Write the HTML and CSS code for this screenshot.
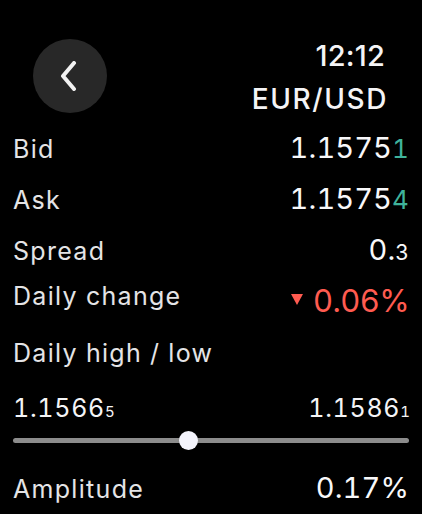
FILE: index.html
```html
<!DOCTYPE html>
<html>
<head>
<meta charset="utf-8">
<link rel="stylesheet" href="styles.css">
</head>
<body>
<div class="screen">
  <header class="header">
    <button class="back" aria-label="Back">
      <svg width="20" height="30" viewBox="0 0 20 30"><path d="M15 2 L4 15 L15 28" fill="none" stroke="#f2f2f2" stroke-width="4" stroke-linecap="round" stroke-linejoin="round"/></svg>
    </button>
    <div class="title">
      <div class="time">12:12</div>
      <div class="pair">EUR/USD</div>
    </div>
  </header>
  <div class="row">
    <span class="label">Bid</span>
    <span class="value">1.1575<span class="pip">1</span></span>
  </div>
  <div class="row">
    <span class="label">Ask</span>
    <span class="value">1.1575<span class="pip">4</span></span>
  </div>
  <div class="row">
    <span class="label">Spread</span>
    <span class="value">0.<span class="small">3</span></span>
  </div>
  <div class="row change">
    <span class="label">Daily change</span>
    <span class="value neg"><span class="tri"></span>0.06%</span>
  </div>
  <div class="row hl-label">
    <span class="label">Daily high / low</span>
  </div>
  <div class="row hl">
    <span class="hlv">1.1566<span class="tiny">5</span></span>
    <span class="hlv">1.1586<span class="tiny">1</span></span>
  </div>
  <div class="slider">
    <div class="track"></div>
    <div class="thumb"></div>
  </div>
  <div class="row amp">
    <span class="label">Amplitude</span>
    <span class="value">0.17%</span>
  </div>
</div>
</body>
</html>
```

FILE: styles.css
```css
* { box-sizing: border-box; }
html, body { margin: 0; padding: 0; background: #000; }
body {
  font-family: Inter, "Noto Sans", "DejaVu Sans", sans-serif;
  color: #e8e8ea;
  width: 422px;
  height: 514px;
  overflow: hidden;
  font-variant-numeric: tabular-nums;
}
.screen { padding: 0 13px 0 13px; }
.header {
  display: flex;
  justify-content: space-between;
  align-items: flex-start;
  padding: 33px 22px 0 20px;
  height: 122px;
}
.back {
  margin-top: 6px;
  width: 74px;
  height: 74px;
  border-radius: 50%;
  border: none;
  background: #282828;
  display: flex;
  align-items: center;
  justify-content: center;
  padding: 0 2px 0 0;
}
.title {
  text-align: right;
  color: #f4f4f6;
  font-weight: 500;
}
.time { font-size: 29px; line-height: 45px; letter-spacing: 0.2px; font-variant-numeric: normal; margin-right: 2px; }
.pair { font-size: 28px; line-height: 43px; letter-spacing: 1.6px; margin-right: -1px; }
.row {
  display: flex;
  justify-content: space-between;
  align-items: baseline;
  height: 51px;
  line-height: 51px;
}
.label { font-size: 25px; color: #e4e4e6; letter-spacing: 1.3px; }
.value { font-size: 29px; color: #f8f8fa; letter-spacing: 0.1px; }
.pip { color: #3fb39b; font-size: 26px; }
.small { font-size: 21px; }
.change { height: 53px; align-items: flex-start; }
.change .label { line-height: 42px; }
.neg { color: #ff5b50; font-size: 31px; line-height: 51px; display: flex; align-items: baseline; letter-spacing: -0.6px; }
.tri {
  width: 0; height: 0;
  border-left: 6px solid transparent;
  border-right: 6px solid transparent;
  border-top: 11px solid #ff5b50;
  margin-right: 10px;
  position: relative;
  top: -7px;
}
.hl-label { height: 55px; }
.hlv { font-size: 25px; color: #f4f4f6; letter-spacing: 0.7px; }
.hlv:last-child { margin-right: -1px; }
.tiny { font-size: 15px; letter-spacing: 0; }
.hl { height: 44px; }
.slider {
  position: relative;
  height: 35px;
}
.track {
  position: absolute;
  left: 0; right: 0;
  top: 11px;
  height: 5px;
  border-radius: 3px;
  background: #8c8c8c;
}
.thumb {
  position: absolute;
  left: 166px;
  top: 4px;
  width: 19px;
  height: 19px;
  border-radius: 50%;
  background: #f3f3fb;
}
.amp { height: 60px; }
```
